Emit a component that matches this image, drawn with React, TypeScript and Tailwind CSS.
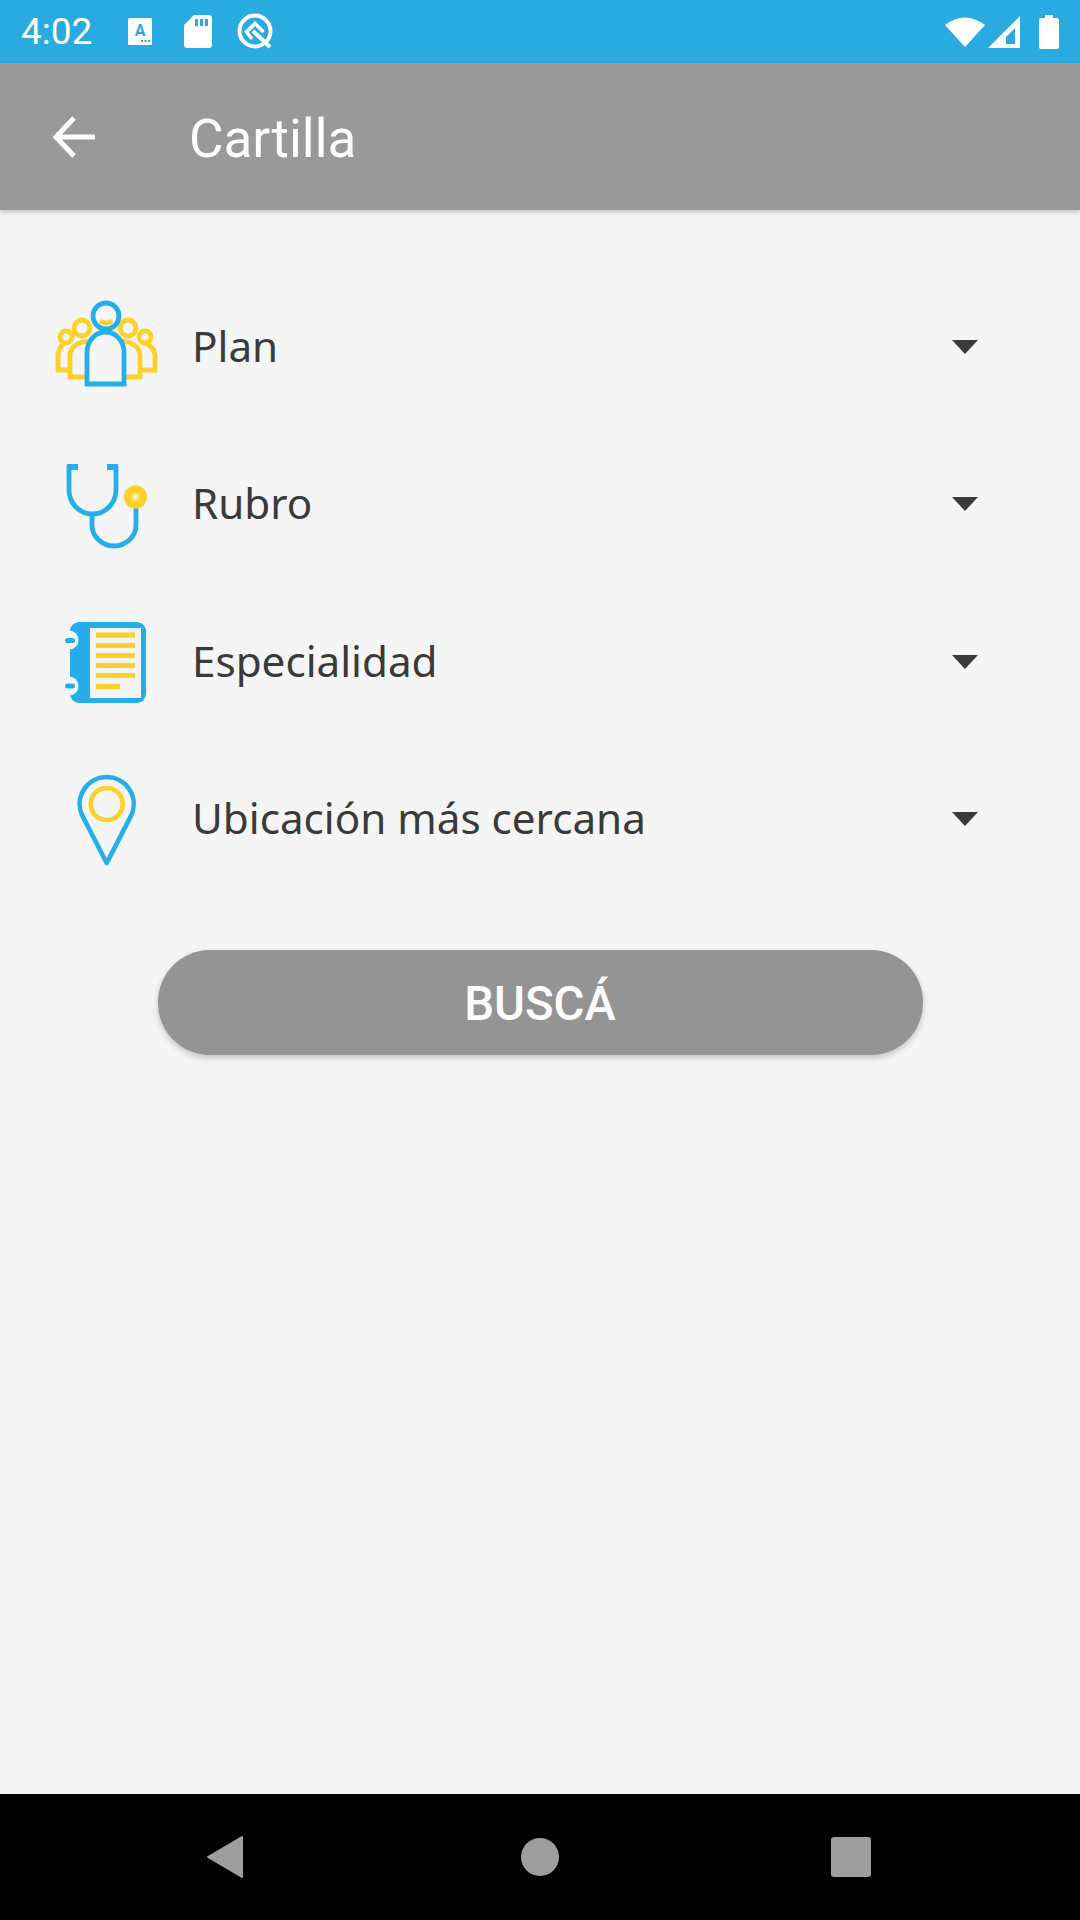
const BLUE = "#29abe2";
const ICON_BLUE = "#25aeea";
const YELLOW = "#ffd02a";

function PeopleIcon() {
  return (
    <svg width="130" height="110" viewBox="0 6 130 110" fill="none" strokeWidth="4.8" className="blur-[0.5px]">
      <g stroke={YELLOW}>
        <circle cx="42" cy="42" r="8" />
        <circle cx="26" cy="51" r="6" />
        <circle cx="88" cy="42" r="8" />
        <circle cx="105" cy="51" r="6" />
        <path d="M46 91H30V70Q30 58 47 55" />
        <path d="M30 84H18V70Q18 62 24 58" />
        <path d="M84 91H100V70Q100 58 83 55" />
        <path d="M100 84H115V70Q115 62 107 58" />
        <path d="M60 35Q66 39 72 35" />
      </g>
      <g stroke={ICON_BLUE}>
        <circle cx="66" cy="30" r="13" />
        <path d="M47 98V66A18.5 20 0 0 1 84 66V98Z" fill="#f5f5f5" />
      </g>
    </svg>
  );
}

function StethoscopeIcon() {
  return (
    <svg width="130" height="110" viewBox="0 3 130 110" fill="none" strokeWidth="4.8" className="blur-[0.5px]">
      <g stroke={ICON_BLUE}>
        <path d="M29 20V44A23.5 24 0 0 0 76 44V20" />
        <path d="M52 68V79A22 21 0 0 0 96 79V60" />
      </g>
      <rect x="27" y="18" width="11" height="6" fill={ICON_BLUE} />
      <rect x="67" y="18" width="11" height="6" fill={ICON_BLUE} />
      <circle cx="95.5" cy="51" r="11.5" fill={YELLOW} />
      <circle cx="95.5" cy="51" r="4" fill="#fbe58c" />
      <circle cx="95.5" cy="51" r="1.5" fill="#f5f5f5" />
    </svg>
  );
}

function NotebookIcon() {
  return (
    <svg width="130" height="110" viewBox="0 1 130 110" fill="none" className="blur-[0.5px]">
      <rect x="30" y="16" width="76" height="81" rx="9" fill={ICON_BLUE} />
      <rect x="50" y="22" width="51" height="70" fill="#f5f5f5" />
      <circle cx="29" cy="34" r="9.5" fill="#f5f5f5" />
      <circle cx="29" cy="80" r="9.5" fill="#f5f5f5" />
      <rect x="25" y="32" width="10" height="5" rx="2.5" fill={ICON_BLUE} />
      <rect x="25" y="77.5" width="10" height="5" rx="2.5" fill={ICON_BLUE} />
      <g fill={YELLOW}>
        <rect x="56" y="26.5" width="39" height="5" />
        <rect x="56" y="37" width="39" height="5" />
        <rect x="56" y="47" width="39" height="5" />
        <rect x="56" y="57" width="39" height="5" />
        <rect x="56" y="67" width="39" height="5" />
        <rect x="56" y="78" width="24" height="5" />
      </g>
    </svg>
  );
}

function PinIcon() {
  return (
    <svg width="130" height="110" viewBox="0 3 130 110" fill="none" strokeWidth="4.6" className="blur-[0.5px]">
      <path d="M66.7 102L42.7 55.4A27 27 0 1 1 90.7 55.4Z" stroke={ICON_BLUE} strokeLinejoin="round" />
      <circle cx="66.7" cy="43" r="16" stroke={YELLOW} />
    </svg>
  );
}

function Row({ icon, label }: { icon: React.ReactNode; label: string }) {
  return (
    <div className="flex h-[157.5px] items-center pl-10 pr-[102px]">
      <div className="shrink-0">{icon}</div>
      <span className="ml-[22px] mb-[3px] flex-1 text-[42.2px] text-[#3a3a3a] [font-family:'Noto_Sans',sans-serif]">
        {label}
      </span>
      <div className="h-0 w-0 border-x-[13px] border-t-[14px] border-x-transparent border-t-[#3a3a3a]" />
    </div>
  );
}

function StatusBar() {
  return (
    <div className="flex h-[63px] items-center bg-[#29abe2] pl-[21px] pr-[21px] text-white">
      <span className="mt-[1px] w-[107px] text-[37px] [font-family:Roboto,sans-serif]">4:02</span>
      {/* keyboard notification */}
      <svg width="24" height="27" viewBox="0 0 24 27" className="mb-[1px]">
        <rect width="24" height="27" rx="1.5" fill="#fff" />
        <text x="12" y="18" textAnchor="middle" fontSize="16" fontWeight="700" fontFamily="Roboto, sans-serif" fill={BLUE}>
          A
        </text>
        <path d="M13 23h2M16.5 23h2M20 23h2" stroke={BLUE} strokeWidth="2" />
      </svg>
      {/* sd card */}
      <svg width="28" height="33" viewBox="0 0 28 33" className="ml-8 mb-[1px]">
        <path d="M10 0H25Q28 0 28 3V30Q28 33 25 33H3Q0 33 0 30V10Z" fill="#fff" />
        <path d="M11 4h3v7h-3zM16 4h3v7h-3zM21 4h3v7h-3z" fill={BLUE} />
      </svg>
      {/* android q */}
      <svg width="38" height="38" viewBox="0 0 38 38" fill="none" className="ml-[25px]">
        <circle cx="18" cy="18" r="15.5" stroke="#fff" strokeWidth="4" />
        <path d="M15 26L9.5 19L18 10.5L26.5 19" stroke="#fff" strokeWidth="3.5" />
        <path d="M16 18L33 34" stroke="#fff" strokeWidth="4" />
      </svg>
      <div className="flex-1" />
      <svg width="40" height="32" viewBox="0 0 40 32">
        <path d="M20 31L0 9Q20 -6 40 9Z" fill="#fff" />
      </svg>
      <svg width="32" height="32" viewBox="0 0 32 32" className="ml-[3px]">
        <path fillRule="evenodd" d="M32 0V32H0ZM27 12L18 21V28H27Z" fill="#fff" />
      </svg>
      <svg width="20" height="34" viewBox="0 0 20 34" className="ml-[19px]">
        <path d="M6 0H14V3H18Q20 3 20 5V32Q20 34 18 34H2Q0 34 0 32V5Q0 3 2 3H6Z" fill="#fff" />
      </svg>
    </div>
  );
}

export default function App() {
  return (
    <div className="flex h-[1920px] w-[1080px] flex-col overflow-hidden bg-[#f5f5f5]">
      <StatusBar />

      {/* Toolbar */}
      <div className="relative flex h-[147px] items-center bg-[#999999] pl-[53px] shadow-[0_2px_5px_rgba(0,0,0,0.22)]">
        <svg width="42" height="42" viewBox="0 0 42 42" fill="none" stroke="#fff" strokeWidth="5">
          <path d="M42 21H3M21 2L3 21L21 40" />
        </svg>
        <span className="ml-[94px] mt-[6px] text-[53px] text-white [font-family:Roboto,sans-serif]">Cartilla</span>
      </div>

      {/* Filters */}
      <div className="pt-[58px]">
        <Row icon={<PeopleIcon />} label="Plan" />
        <Row icon={<StethoscopeIcon />} label="Rubro" />
        <Row icon={<NotebookIcon />} label="Especialidad" />
        <Row icon={<PinIcon />} label="Ubicación más cercana" />
      </div>

      <button className="mx-auto mt-[52px] flex h-[105px] w-[765px] items-center justify-center rounded-[52px] bg-[#949494] pt-[3px] text-[47.25px] font-medium text-white shadow-[0_3px_6px_rgba(0,0,0,0.2)] [font-family:Roboto,sans-serif]">
        BUSCÁ
      </button>

      <div className="flex-1" />

      {/* Nav bar */}
      <div className="relative flex h-[126px] items-center bg-black">
        <svg width="38" height="44" viewBox="0 0 38 44" className="ml-[206px]">
          <path d="M36 2V42L2 22Z" fill="#9e9e9e" stroke="#9e9e9e" strokeWidth="2" strokeLinejoin="round" />
        </svg>
        <div className="ml-[277px] h-[38px] w-[38px] rounded-full bg-[#9e9e9e]" />
        <div className="ml-[272px] h-[40px] w-[40px] rounded-[3px] bg-[#9e9e9e]" />
      </div>
    </div>
  );
}
